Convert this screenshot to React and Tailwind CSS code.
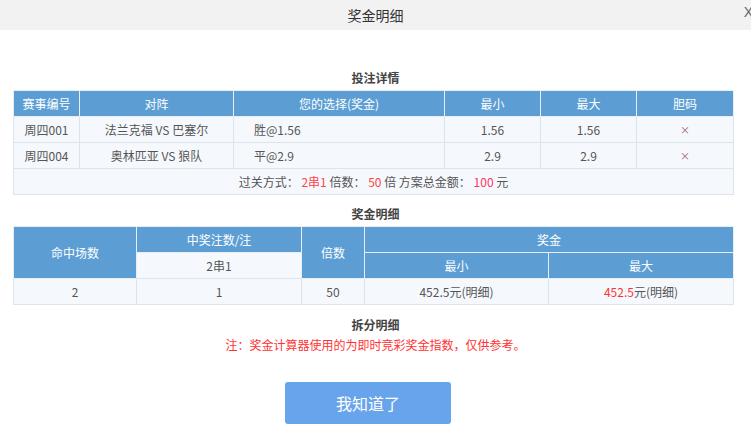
import React from 'react';

const th = 'bg-[#5c9ed4] text-white font-normal border border-[#e8eef5] text-center';
const td = 'border border-[#dfe4ea] text-center text-[#555]';

const BetTable = () => (
  <table className="w-[720px] mx-[13px] border-collapse border border-[#bcd2ea] table-fixed text-[12px]">
    <colgroup>
      <col className="w-[66px]" />
      <col className="w-[154px]" />
      <col className="w-[211px]" />
      <col className="w-[96px]" />
      <col className="w-[96px]" />
      <col className="w-[97px]" />
    </colgroup>
    <thead>
      <tr className="h-[26px]">
        <th className={th}>赛事编号</th>
        <th className={th}>对阵</th>
        <th className={th}>您的选择(奖金)</th>
        <th className={th}>最小</th>
        <th className={th}>最大</th>
        <th className={th}>胆码</th>
      </tr>
    </thead>
    <tbody className="bg-[#f5f9fd]">
      <tr className="h-[26px]">
        <td className={td}>周四001</td>
        <td className={td}>法兰克福 VS 巴塞尔</td>
        <td className={`${td} !text-left pl-[20px]`}>胜@1.56</td>
        <td className={td}>1.56</td>
        <td className={td}>1.56</td>
        <td className={`${td} !text-[#a05a6a] !text-[10px]`}>×</td>
      </tr>
      <tr className="h-[26px]">
        <td className={td}>周四004</td>
        <td className={td}>奥林匹亚 VS 狼队</td>
        <td className={`${td} !text-left pl-[20px]`}>平@2.9</td>
        <td className={td}>2.9</td>
        <td className={td}>2.9</td>
        <td className={`${td} !text-[#a05a6a] !text-[10px]`}>×</td>
      </tr>
      <tr className="h-[26px]">
        <td className={td} colSpan={6}>
          过关方式： <span className="text-[#f44]">2串1</span> 倍数： <span className="text-[#f44]">50</span> 倍 方案总金额： <span className="text-[#f36]">100</span> 元
        </td>
      </tr>
    </tbody>
  </table>
);

const PrizeTable = () => (
  <table className="w-[720px] mx-[13px] border-collapse border border-[#bcd2ea] table-fixed text-[12px]">
    <colgroup>
      <col className="w-[123px]" />
      <col className="w-[165px]" />
      <col className="w-[63px]" />
      <col className="w-[184px]" />
      <col className="w-[185px]" />
    </colgroup>
    <thead>
      <tr className="h-[26px]">
        <th className={th} rowSpan={2}>命中场数</th>
        <th className={th}>中奖注数/注</th>
        <th className={th} rowSpan={2}>倍数</th>
        <th className={th} colSpan={2}>奖金</th>
      </tr>
      <tr className="h-[26px]">
        <th className="bg-[#f5f9fd] text-[#555] font-normal border border-[#dfe4ea] text-center">2串1</th>
        <th className={th}>最小</th>
        <th className={th}>最大</th>
      </tr>
    </thead>
    <tbody className="bg-[#f5f9fd]">
      <tr className="h-[26px]">
        <td className={td}>2</td>
        <td className={td}>1</td>
        <td className={td}>50</td>
        <td className={td}>452.5元(明细)</td>
        <td className={td}>
          <span className="text-[#f33]">452.5</span>元(明细)
        </td>
      </tr>
    </tbody>
  </table>
);

export default function App() {
  return (
    <div
      className="w-[751px] h-[441px] bg-white overflow-hidden relative"
      style={{ fontFamily: '"Noto Sans CJK SC", "Liberation Sans", sans-serif' }}
    >
      <div className="h-[30px] bg-[#f2f2f2] flex items-center justify-center text-[14px] text-[#333]">
        奖金明细
      </div>
      <span
        className="absolute top-[5px] right-[-2px] text-[14px] leading-[14px] text-[#666]"
        style={{ fontFamily: '"Liberation Sans", sans-serif' }}
      >
        X
      </span>

      <div className="mt-[38px] mb-[2px] text-center text-[12px] leading-[20px] font-bold text-[#444]">投注详情</div>
      <BetTable />

      <div className="mt-[9px] mb-[2px] text-center text-[12px] leading-[20px] font-bold text-[#444]">奖金明细</div>
      <PrizeTable />

      <div className="mt-[10px] text-center text-[12px] leading-[20px] font-bold text-[#444]">拆分明细</div>
      <div className="text-center text-[12px] leading-[20px] text-[#f33]">
        注：奖金计算器使用的为即时竞彩奖金指数，仅供参考。
      </div>

      <div className="mt-[27px] pl-[285px] flex">
        <button className="w-[166px] h-[42px] rounded-[3px] bg-[#68a4ec] text-white text-[16px]">
          我知道了
        </button>
      </div>
    </div>
  );
}
